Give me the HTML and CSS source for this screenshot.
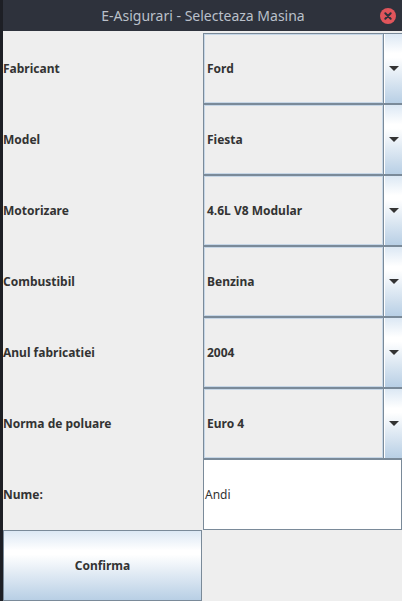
FILE: index.html
```html
<!DOCTYPE html>
<html lang="ro">
<head>
    <meta charset="UTF-8">
    <title>E-Asigurari - Selecteaza Masina</title>
    <link rel="stylesheet" href="styles.css">
</head>
<body>
    <!-- Fereastra principala -->
    <div class="window">
        <!-- Bara de titlu -->
        <header class="titlebar">
            <span class="title">E-Asigurari - Selecteaza Masina</span>
            <span class="close">
                <svg width="16" height="16" viewBox="0 0 16 16">
                    <circle cx="8" cy="8" r="8" fill="#e0555b"/>
                    <path d="M5.3 5.3 L10.7 10.7 M10.7 5.3 L5.3 10.7" stroke="#2e323c" stroke-width="2" stroke-linecap="round"/>
                </svg>
            </span>
        </header>

        <!-- Formularul -->
        <main class="form">
            <label class="label">Fabricant</label>
            <div class="combo"><span class="value">Ford</span><span class="arrow"><i></i></span></div>

            <label class="label">Model</label>
            <div class="combo"><span class="value">Fiesta</span><span class="arrow"><i></i></span></div>

            <label class="label">Motorizare</label>
            <div class="combo"><span class="value">4.6L V8 Modular</span><span class="arrow"><i></i></span></div>

            <label class="label">Combustibil</label>
            <div class="combo"><span class="value">Benzina</span><span class="arrow"><i></i></span></div>

            <label class="label">Anul fabricatiei</label>
            <div class="combo"><span class="value">2004</span><span class="arrow"><i></i></span></div>

            <label class="label">Norma de poluare</label>
            <div class="combo"><span class="value">Euro 4</span><span class="arrow"><i></i></span></div>

            <label class="label">Nume:</label>
            <div class="textfield">Andi</div>

            <button class="confirm">Confirma</button>
            <div class="empty"></div>
        </main>
    </div>
</body>
</html>
```

FILE: styles.css
```css
/* Fundalul (desktop) */
body {
    margin: 0;
    background: #1d1f25;
    overflow: hidden;
    height: 601px;
}

/* Fereastra */
.window {
    margin-left: 3px;
    width: 399px;
    height: 601px;
    background: #eeeeee;
    font-family: "Noto Sans", sans-serif;
}

/* Bara de titlu */
.titlebar {
    height: 31px;
    background: #2e323c;
    display: flex;
    align-items: center;
    justify-content: center;
    position: relative;
}

.title {
    color: #bac0ca;
    font-size: 14px;
    margin-left: 1px;
}

.close {
    position: absolute;
    right: 6px;
    top: 8px;
    width: 16px;
    height: 16px;
    display: flex;
}

/* Grila formularului */
.form {
    display: grid;
    grid-template-columns: 200px 199px;
    grid-template-rows: repeat(8, 71px);
    padding-top: 2px;
}

.label {
    display: flex;
    align-items: center;
    font-size: 12px;
    font-weight: bold;
    color: #333333;
}

/* Combobox */
.combo {
    display: flex;
    border: 1px solid #7a8a99;
    border-right: none;
    background: #eeeeee;
}

.value {
    flex: 1;
    display: flex;
    align-items: center;
    padding-left: 3px;
    font-size: 12px;
    font-weight: bold;
    color: #333333;
    box-shadow: inset 1px 1px 0 #c6d6e6, inset -1px -1px 0 #c6d6e6;
    border-right: 1px solid #7a8a99;
}

.arrow {
    width: 18px;
    display: flex;
    align-items: center;
    justify-content: center;
    background: linear-gradient(#dce8f4 0%, #ffffff 28%, #ffffff 34%, #b8cfe5 100%);
    box-shadow: inset 1px 0 0 #ffffff;
}

.arrow i {
    width: 0;
    height: 0;
    border-left: 5px solid transparent;
    border-right: 5px solid transparent;
    border-top: 5px solid #333333;
    margin-left: 2px;
}

/* Campul de text */
.textfield {
    background: #ffffff;
    border: 1px solid #7a8a99;
    display: flex;
    align-items: center;
    padding-left: 1px;
    font-size: 12px;
    color: #333333;
}

/* Butonul */
.confirm {
    margin: 0 1px 0 0;
    border: 1px solid #7a8a99;
    background: linear-gradient(#dce8f4 0%, #ffffff 28%, #ffffff 34%, #b8cfe5 100%);
    font-family: "Noto Sans", sans-serif;
    font-size: 12px;
    font-weight: bold;
    color: #333333;
    padding: 0;
}
```
